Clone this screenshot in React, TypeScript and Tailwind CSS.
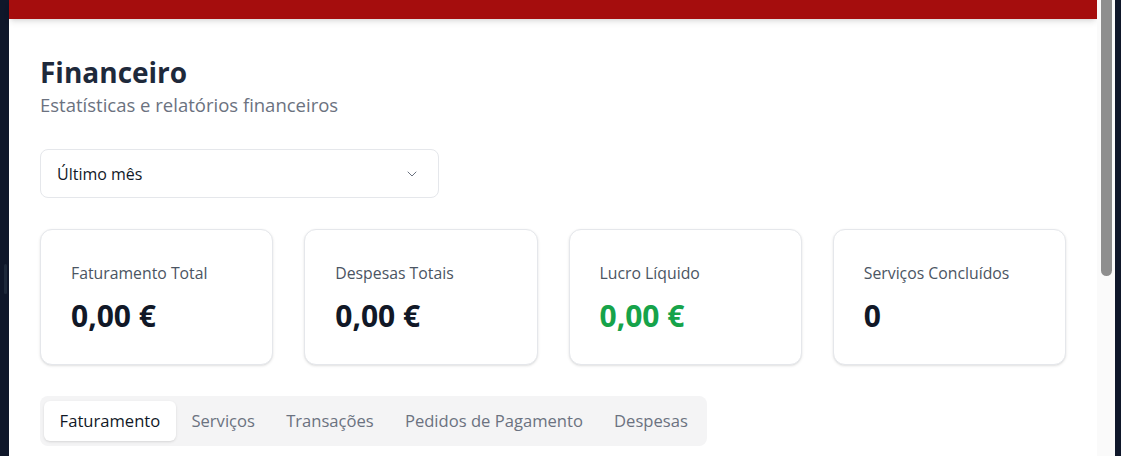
import React, { useState } from 'react'
import { ChevronDown } from 'lucide-react'

const STATS = [
  { label: 'Faturamento Total', value: '0,00 €', green: false },
  { label: 'Despesas Totais', value: '0,00 €', green: false },
  { label: 'Lucro Líquido', value: '0,00 €', green: true },
  { label: 'Serviços Concluídos', value: '0', green: false },
]

const TABS = ['Faturamento', 'Serviços', 'Transações', 'Pedidos de Pagamento', 'Despesas']

const App: React.FC = () => {
  const [tab, setTab] = useState('Faturamento')

  return (
    <div className="flex h-[456px] w-full overflow-hidden bg-[#0f172a] font-['Open_Sans',sans-serif]">
      <div className="relative w-[9px] shrink-0">
        <div className="absolute left-[4px] top-[264px] h-[30px] w-[3px] rounded bg-[#1e293b]" />
      </div>

      <div className="flex-1 bg-white">
        <div className="h-[19px] bg-[#a50d0d] shadow-md" />

        <div className="px-[31px] pt-[35px]">
          <h1 className="text-[28px] font-bold leading-[36px] text-[#1e293b]">Financeiro</h1>
          <p className="mt-[2px] text-[18.5px] leading-[26px] text-[#6b7280]">
            Estatísticas e relatórios financeiros
          </p>

          <button className="mt-[31px] flex h-[49px] w-[399px] items-center justify-between rounded-lg border border-[#e5e7eb] bg-white pl-[16px] pr-[18px] text-[16px] text-[#111827]">
            <span>Último mês</span>
            <ChevronDown className="h-[16px] w-[16px] text-[#6b7280]" strokeWidth={1.5} />
          </button>

          <div className="mt-[31px] grid grid-cols-4 gap-[31px]">
            {STATS.map((s) => (
              <div
                key={s.label}
                className="h-[136px] rounded-xl border border-[#e5e7eb] bg-white pl-[30px] pt-[31px] shadow-sm"
              >
                <div className="text-[15.8px] leading-[24px] text-[#4b5563]">{s.label}</div>
                <div
                  className={`mt-[13px] text-[30px] font-bold leading-[36px] ${
                    s.green ? 'text-[#16a34a]' : 'text-[#111827]'
                  }`}
                >
                  {s.value}
                </div>
              </div>
            ))}
          </div>

          <div className="mt-[31px] inline-flex h-[50px] items-center rounded-lg bg-[#f4f4f5] px-[4px]">
            {TABS.map((t) => (
              <button
                key={t}
                onClick={() => setTab(t)}
                className={`h-[40px] rounded-md px-[15.6px] text-[16.6px] ${
                  tab === t ? 'bg-white text-[#111827] shadow-sm' : 'text-[#6b7280]'
                }`}
              >
                {t}
              </button>
            ))}
          </div>
        </div>
      </div>

      <div className="w-[18px] shrink-0 bg-[#fafafa] pl-[4px]">
        <div className="h-[276px] w-[11px] rounded-b-full bg-[#8e8e8e]" />
      </div>
      <div className="w-[6px] shrink-0" />
    </div>
  )
}

export default App
